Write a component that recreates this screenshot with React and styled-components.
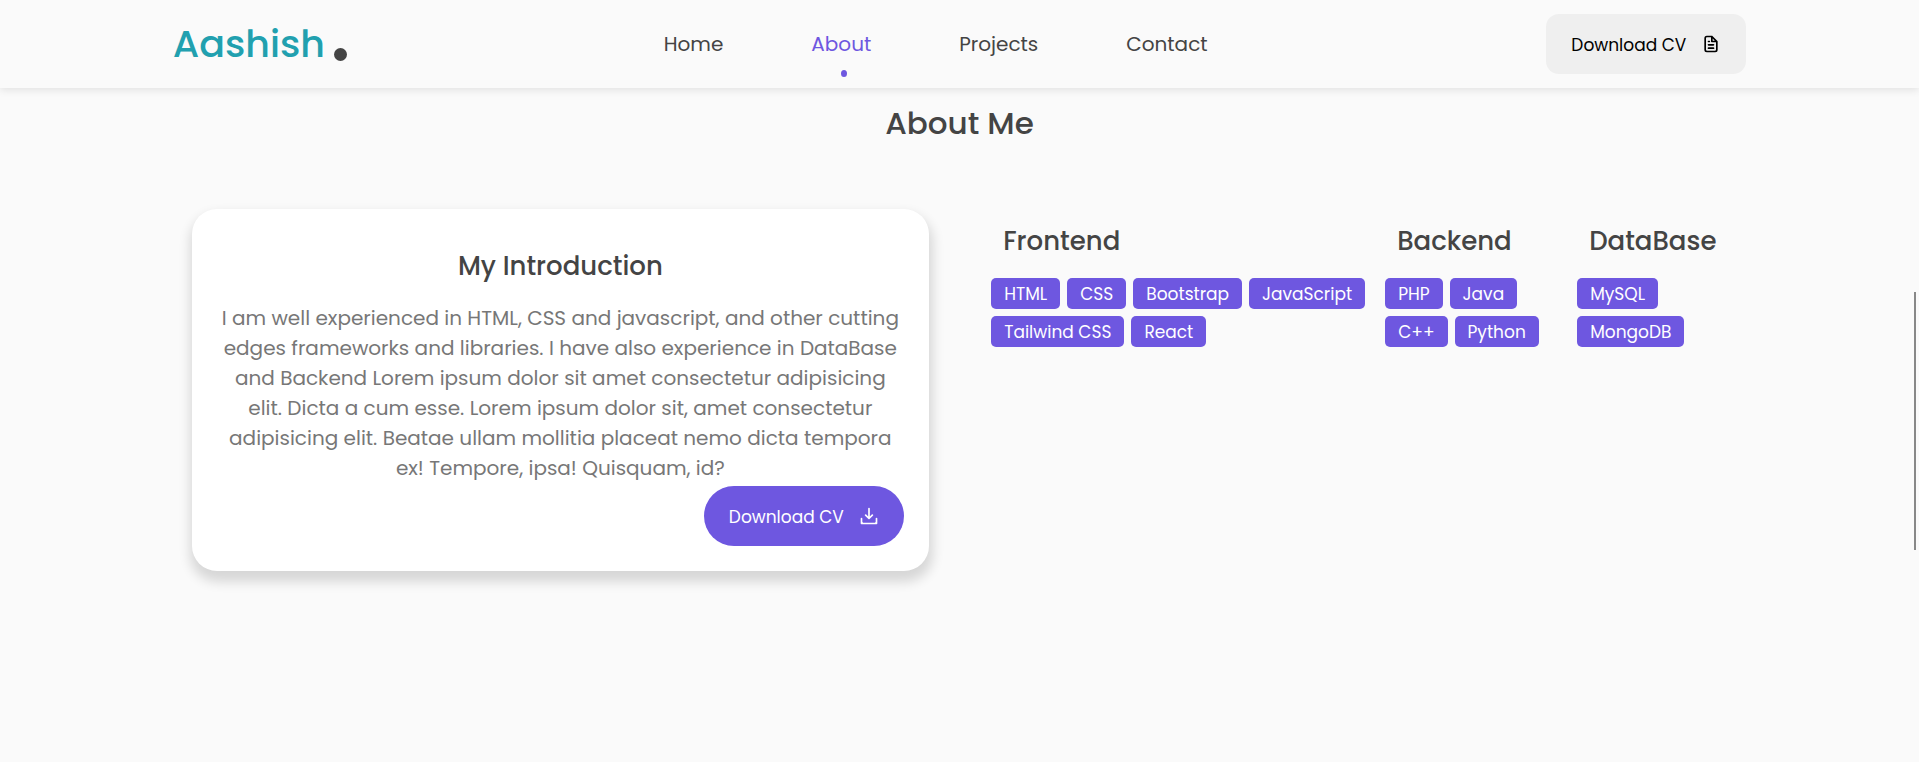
import React from "react";
import styled, { createGlobalStyle } from "styled-components";

const GlobalStyle = createGlobalStyle`
  * { box-sizing: border-box; margin: 0; padding: 0; }
  body {
    background: #fafafa;
    color: #444;
    font-family: "Poppins", "Inter", sans-serif;
  }
  a { color: inherit; text-decoration: none; }
`;

const Header = styled.header`
  display: flex;
  align-items: center;
  justify-content: space-between;
  height: 88px;
  padding: 0 9vw;
  background: #fafafa;
  box-shadow: 0 2px 8px rgba(0, 0, 0, 0.1);
`;

const Logo = styled.a`
  position: relative;
  color: #21a0af;
  font-size: 38px;
  font-weight: 500;
  line-height: 60px;

  &::after {
    content: "";
    position: absolute;
    right: -22px;
    bottom: 13px;
    width: 13px;
    height: 13px;
    border-radius: 50%;
    background: #444;
  }
`;

const NavList = styled.ul`
  display: flex;
  gap: 88px;
  list-style: none;
`;

const NavLink = styled.a`
  position: relative;
  display: block;
  color: ${(p) => (p.$active ? "#6e57e0" : "#444")};
  font-size: 20px;
  line-height: 30px;

  &::after {
    content: "";
    display: ${(p) => (p.$active ? "block" : "none")};
    position: absolute;
    left: 50%;
    bottom: -18px;
    width: 6px;
    height: 7px;
    border-radius: 50%;
    background: #6e57e0;
  }
`;

const Button = styled.button`
  display: flex;
  align-items: center;
  gap: 15px;
  height: 60px;
  padding: 0 25px;
  border: none;
  border-radius: ${(p) => (p.$primary ? "30px" : "13px")};
  background: ${(p) => (p.$primary ? "#6e57e0" : "#efefef")};
  color: ${(p) => (p.$primary ? "#fff" : "#000")};
  font-family: inherit;
  font-size: 17px;
  line-height: 26px;
  white-space: nowrap;
  cursor: pointer;
`;

const ButtonLabel = styled.span`
  padding-top: 2px;
`;

const Icon = styled.svg`
  width: 20px;
  height: 20px;
  fill: currentColor;
`;

const Section = styled.section`
  padding: 12px 10vw 80px;
`;

const Title = styled.h2`
  margin-bottom: 63px;
  font-size: 31px;
  font-weight: 500;
  line-height: 46px;
  text-align: center;
`;

const Row = styled.div`
  display: flex;
  justify-content: space-between;
  align-items: flex-start;
`;

const Card = styled.article`
  display: flex;
  flex-direction: column;
  width: 48%;
  padding: 37px 25px 25px;
  border-radius: 25px;
  background: #fff;
  box-shadow: 1px 8px 12px 3px rgba(0, 0, 0, 0.14);
`;

const CardTitle = styled.h3`
  margin-bottom: 17px;
  font-size: 26px;
  font-weight: 500;
  line-height: 40px;
  text-align: center;
`;

const CardText = styled.p`
  margin-bottom: 3px;
  color: #777;
  font-size: 20px;
  line-height: 30px;
  text-align: center;
`;

const CardAction = styled.div`
  display: flex;
  justify-content: flex-end;
`;

const Skills = styled.div`
  display: grid;
  grid-template-columns: 394fr 192fr 151fr;
  width: 48%;
`;

const SkillTitle = styled.h3`
  padding: 12px 0 17px 13px;
  font-size: 26px;
  font-weight: 500;
  line-height: 40px;
`;

const Chips = styled.ul`
  display: flex;
  flex-wrap: wrap;
  gap: 7px;
  padding: 0 8px 0 1px;
  list-style: none;
`;

const Chip = styled.li`
  padding: 1px 13px 0;
  border-radius: 5px;
  background: #6e57e0;
  color: #fff;
  font-size: 17px;
  line-height: 30px;
`;

const ScrollThumb = styled.div`
  position: fixed;
  top: 292px;
  right: 3px;
  width: 2px;
  height: 258px;
  background: #888;
`;

const FileIcon = () => (
  <Icon viewBox="0 0 24 24" aria-hidden="true">
    <path d="M9,10h1a1,1,0,0,0,0-2H9a1,1,0,0,0,0,2Zm0,2a1,1,0,0,0,0,2h6a1,1,0,0,0,0-2Zm11-3.06a1.31,1.31,0,0,0-.06-.27l0-.09a1.07,1.07,0,0,0-.19-.28h0l-6-6h0a1.07,1.07,0,0,0-.28-.19.32.32,0,0,0-.09,0A.88.88,0,0,0,13.05,2H7A3,3,0,0,0,4,5V19a3,3,0,0,0,3,3H17a3,3,0,0,0,3-3V9S20,9,20,8.94ZM14,5.41,16.59,8H14ZM18,19a1,1,0,0,1-1,1H7a1,1,0,0,1-1-1V5A1,1,0,0,1,7,4h5V9a1,1,0,0,0,1,1h5Zm-3-3H9a1,1,0,0,0,0,2h6a1,1,0,0,0,0-2Z" />
  </Icon>
);

const ImportIcon = () => (
  <Icon viewBox="0 0 24 24" aria-hidden="true">
    <path d="M21,14a1,1,0,0,0-1,1v4a1,1,0,0,1-1,1H5a1,1,0,0,1-1-1V15a1,1,0,0,0-2,0v6a1,1,0,0,0,1,1H21a1,1,0,0,0,1-1V15A1,1,0,0,0,21,14Zm-9.71,1.71a1,1,0,0,0,.33.21.94.94,0,0,0,.76,0,1,1,0,0,0,.33-.21l4-4a1,1,0,0,0-1.42-1.42L13,12.59V3a1,1,0,0,0-2,0v9.59l-2.29-2.3a1,1,0,0,0-1.42,1.42Z" />
  </Icon>
);

const links = ["Home", "About", "Projects", "Contact"];

const skills = [
  { name: "Frontend", items: ["HTML", "CSS", "Bootstrap", "JavaScript", "Tailwind CSS", "React"] },
  { name: "Backend", items: ["PHP", "Java", "C++", "Python"] },
  { name: "DataBase", items: ["MySQL", "MongoDB"] },
];

export default function App() {
  return (
    <>
      <GlobalStyle />
      <Header>
        <Logo href="#home">Aashish</Logo>
        <nav>
          <NavList>
            {links.map((label) => (
              <li key={label}>
                <NavLink href={`#${label.toLowerCase()}`} $active={label === "About"}>
                  {label}
                </NavLink>
              </li>
            ))}
          </NavList>
        </nav>
        <Button type="button">
          <ButtonLabel>Download CV</ButtonLabel>
          <FileIcon />
        </Button>
      </Header>
      <main>
        <Section id="about">
          <Title>About Me</Title>
          <Row>
            <Card>
              <CardTitle>My Introduction</CardTitle>
              <CardText>
                I am well experienced in HTML, CSS and javascript, and other cutting edges
                frameworks and libraries. I have also experience in DataBase and Backend Lorem
                ipsum dolor sit amet consectetur adipisicing elit. Dicta a cum esse. Lorem ipsum
                dolor sit, amet consectetur adipisicing elit. Beatae ullam mollitia placeat nemo
                dicta tempora ex! Tempore, ipsa! Quisquam, id?
              </CardText>
              <CardAction>
                <Button type="button" $primary>
                  <ButtonLabel>Download CV</ButtonLabel>
                  <ImportIcon />
                </Button>
              </CardAction>
            </Card>
            <Skills>
              {skills.map((group) => (
                <div key={group.name}>
                  <SkillTitle>{group.name}</SkillTitle>
                  <Chips>
                    {group.items.map((item) => (
                      <Chip key={item}>{item}</Chip>
                    ))}
                  </Chips>
                </div>
              ))}
            </Skills>
          </Row>
        </Section>
      </main>
      <ScrollThumb />
    </>
  );
}
